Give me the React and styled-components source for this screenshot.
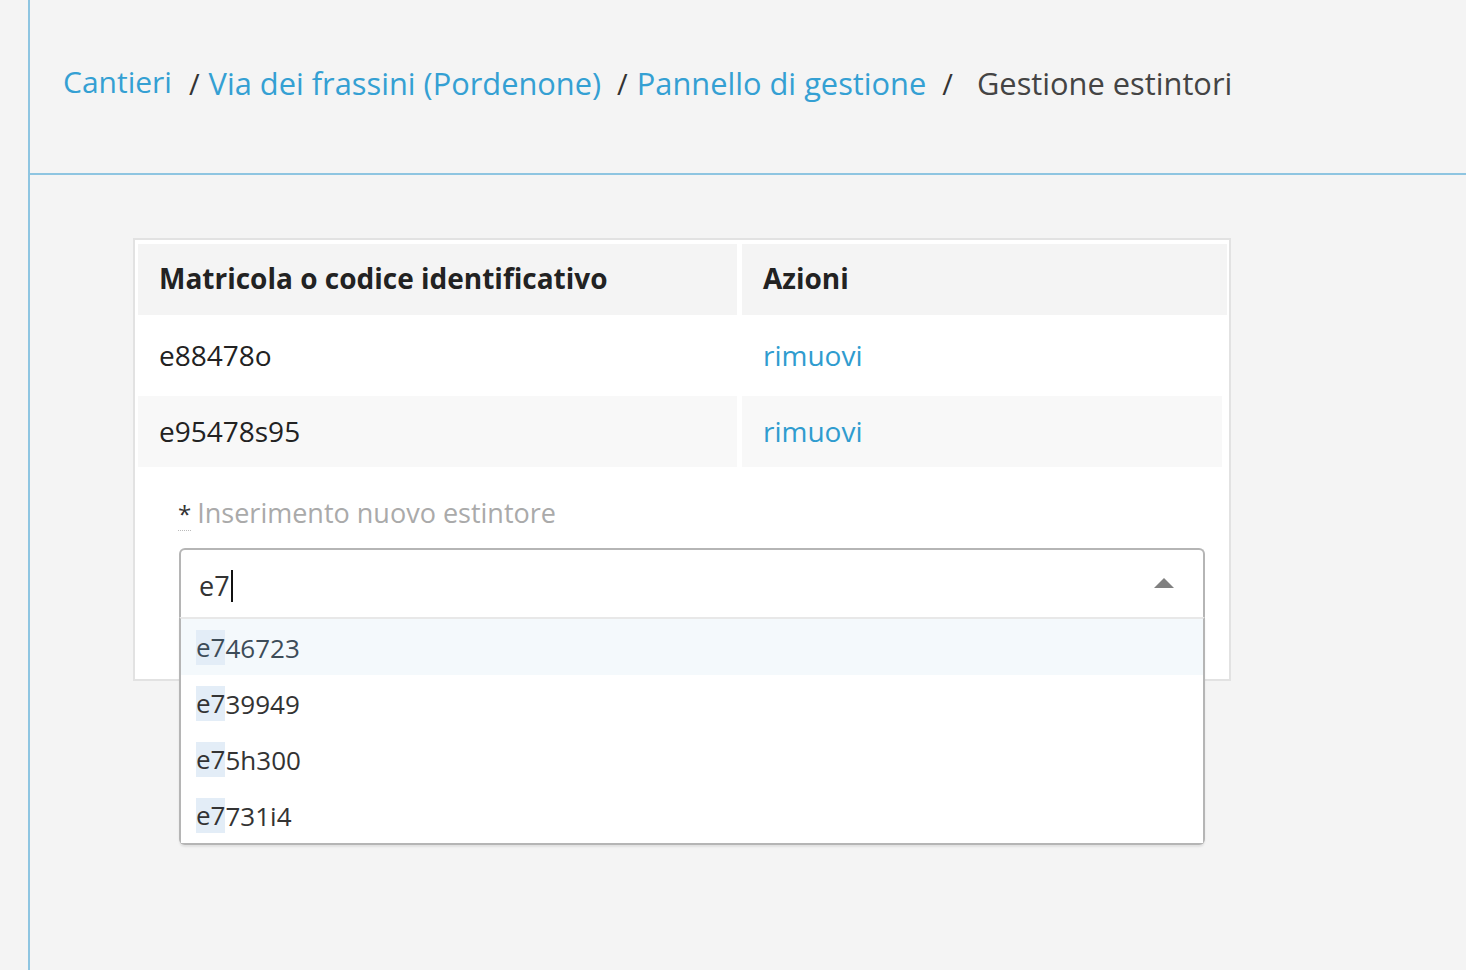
import React from "react";
import styled, { createGlobalStyle } from "styled-components";

const Global = createGlobalStyle`
  html, body { margin: 0; padding: 0; background: #f4f4f4; }
  body { font-family: "Open Sans", "Liberation Sans", sans-serif; color: #333; }
  * { box-sizing: border-box; }
`;

const Page = styled.div`
  display: flex;
  min-height: 970px;
  background: #f4f4f4;
`;

const Gutter = styled.div`
  width: 28px;
  flex: none;
`;

const Main = styled.main`
  flex: 1;
  border-left: 2px solid #8ec5e1;
  display: flex;
  flex-direction: column;
`;

const Header = styled.header`
  height: 175px;
  border-bottom: 2px solid #8ec5e1;
  padding: 62px 0 0 33px;
`;

const Crumbs = styled.nav`
  display: flex;
  align-items: baseline;
  font-size: 30.8px;
  font-weight: 400;
  line-height: 42px;
`;

const CrumbLink = styled.a`
  color: #34a0d3;
  text-decoration: none;
  position: relative;
  top: ${(p) => (p.$first ? "-2px" : "0")};
  font-size: ${(p) => (p.$first ? "30px" : "inherit")};
`;

const Sep = styled.span`
  color: #333;
  margin: ${(p) => p.$m || "0 9px 0 16px"};
  font-size: 29px;
`;

const Current = styled.span`
  color: #444;
`;

const Content = styled.section`
  padding: 63px 0 0 103px;
`;

const Panel = styled.div`
  width: 1098px;
  height: 443px;
  background: #fff;
  border: 2px solid #e2e2e2;
  padding: 4px 3px 0 3px;
  position: relative;
`;

const Grid = styled.div`
  display: grid;
  grid-template-columns: 599px 485px;
  column-gap: 5px;
  row-gap: 5px;
`;

const HeadCell = styled.div`
  background: #f4f4f4;
  height: 71px;
  display: flex;
  align-items: center;
  padding: 0 0 3px 21px;
  font-size: 28px;
  font-weight: 700;
  color: #222;
`;

const Cell = styled.div`
  background: ${(p) => (p.$alt ? "#f8f8f8" : "#fff")};
  height: 71px;
  display: flex;
  align-items: center;
  padding: 0 0 1px 21px;
  font-size: 28px;
  color: #222;
  margin-right: ${(p) => (p.$narrow ? "5px" : "0")};
`;

const ActionLink = styled.a`
  color: #2f9ccf;
  text-decoration: none;
`;

const FormGroup = styled.div`
  padding: 26px 0 0 40px;
`;

const Label = styled.label`
  display: block;
  font-size: 27px;
  line-height: 40px;
  color: #aaa;
  margin-bottom: 14px;
`;

const Req = styled.abbr`
  color: #333;
  text-decoration: none;
  border-bottom: 1px dotted #bbb;
  margin-right: 6px;
  font-size: 24px;
`;

const SelectWrap = styled.div`
  position: relative;
  width: 1026px;
  margin-left: 1px;
  z-index: 2;
`;

const Control = styled.div`
  height: 69px;
  border: 2px solid #b5b5b5;
  border-bottom: none;
  border-radius: 6px 6px 0 0;
  background: #fff;
  display: flex;
  align-items: center;
  padding: 4px 29px 0 18px;
`;

const Value = styled.div`
  flex: 1;
  display: flex;
  align-items: center;
  font-size: 27px;
  color: #333;
`;

const Caret = styled.span`
  display: inline-block;
  width: 2px;
  height: 32px;
  background: #111;
  margin-left: 1px;
`;

const Arrow = styled.span`
  width: 0;
  height: 0;
  border-left: 10px solid transparent;
  border-right: 10px solid transparent;
  border-bottom: 10px solid #808080;
  margin-top: -6px;
`;

const Menu = styled.div`
  position: absolute;
  left: 0;
  right: 0;
  top: 69px;
  background: #fff;
  border: 2px solid #b5b5b5;
  border-top: 2px solid #e8e8e8;
  border-radius: 0 0 6px 6px;
  box-shadow: 0 2px 2px rgba(0, 0, 0, 0.08);
`;

const Option = styled.div`
  height: 56px;
  display: flex;
  align-items: center;
  padding: 1px 0 0 15px;
  font-size: 26px;
  color: ${(p) => (p.$focused ? "#3d4c58" : "#333")};
  background: ${(p) => (p.$focused ? "#f4f9fc" : "#fff")};
`;

const Mark = styled.mark`
  display: inline-block;
  background: #e3edf7;
  color: inherit;
  line-height: 35px;
`;

const options = ["e746723", "e739949", "e75h300", "e7731i4"];
const rows = [
  { code: "e88478o", alt: false },
  { code: "e95478s95", alt: true },
];

export default function App() {
  return (
    <>
      <Global />
      <Page>
        <Gutter />
        <Main>
          <Header>
            <Crumbs>
              <CrumbLink href="#" $first>Cantieri</CrumbLink>
              <Sep $m="0 9px 0 17px">/</Sep>
              <CrumbLink href="#">Via dei frassini (Pordenone)</CrumbLink>
              <Sep>/</Sep>
              <CrumbLink href="#">Pannello di gestione</CrumbLink>
              <Sep $m="0 24px 0 16px">/</Sep>
              <Current>Gestione estintori</Current>
            </Crumbs>
          </Header>
          <Content>
            <Panel>
              <Grid>
                <HeadCell>Matricola o codice identificativo</HeadCell>
                <HeadCell>Azioni</HeadCell>
                {rows.map((r) => (
                  <React.Fragment key={r.code}>
                    <Cell $alt={r.alt}>{r.code}</Cell>
                    <Cell $alt={r.alt} $narrow={r.alt}>
                      <ActionLink href="#">rimuovi</ActionLink>
                    </Cell>
                  </React.Fragment>
                ))}
              </Grid>
              <FormGroup>
                <Label>
                  <Req title="required">*</Req>Inserimento nuovo estintore
                </Label>
                <SelectWrap>
                  <Control>
                    <Value>
                      e7<Caret />
                    </Value>
                    <Arrow />
                  </Control>
                  <Menu>
                    {options.map((o, i) => (
                      <Option key={o} $focused={i === 0}>
                        <Mark>{o.slice(0, 2)}</Mark>
                        {o.slice(2)}
                      </Option>
                    ))}
                  </Menu>
                </SelectWrap>
              </FormGroup>
            </Panel>
          </Content>
        </Main>
      </Page>
    </>
  );
}
